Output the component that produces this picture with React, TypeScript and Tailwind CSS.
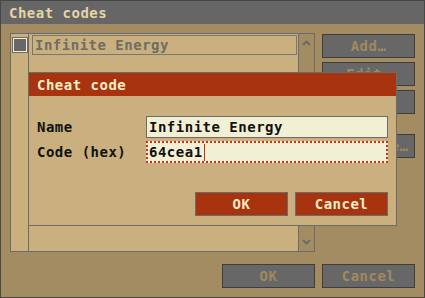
import React from 'react';

const GrayButton: React.FC<{ label: string; className?: string }> = ({ label, className = '' }) => (
  <div
    className={`w-[93px] h-[24px] bg-[#676767] border border-[#3e3e3e] flex items-center justify-center text-[#a08a5c] ${className}`}
  >
    {label}
  </div>
);

const RedButton: React.FC<{ label: string }> = ({ label }) => (
  <div className="w-[93px] h-[24px] bg-[#a8330f] border border-[#6b6b6b] flex items-center justify-center text-[#f6edc6]">
    {label}
  </div>
);

const Chevron: React.FC<{ up?: boolean }> = ({ up }) => (
  <svg width="9" height="6" viewBox="0 0 9 6" className="block">
    <polyline
      points={up ? '1,5 4.5,1.5 8,5' : '1,1 4.5,4.5 8,1'}
      fill="none"
      stroke="#6b6b6b"
      strokeWidth="2"
    />
  </svg>
);

const App: React.FC = () => {
  return (
    <div className="w-[425px] h-[298px] border border-[#474747] bg-[#a38c62] flex flex-col relative overflow-hidden font-['DejaVu_Sans_Mono',monospace] font-bold text-[14px] tracking-[0.5px] leading-none">
      {/* Window title */}
      <div className="h-[23px] shrink-0 bg-[#666666] pl-[8px] flex items-center text-[#e3d5a4]">
        Cheat codes
      </div>

      {/* Body */}
      <div className="flex-1 flex flex-col px-[9px] py-[9px]">
        <div className="flex gap-[7px] h-[219px]">
          {/* Cheat list */}
          <div className="w-[306px] h-full border border-[#6b6b6b] bg-[#c9b07e] flex">
            <div className="w-[18px] shrink-0 border-r border-[#6b6b6b] flex justify-center pt-[4px] pl-[1px]">
              <span className="w-[14px] h-[14px] border border-[#f3efcf] bg-[#676767] outline outline-1 outline-[#6b6b6b]" />
            </div>
            <div className="flex-1 pl-[3px] pr-[1px] pt-[1px]">
              <div className="h-[20px] border border-[#777777] flex items-center pl-[2px] text-[#6e6c66]">
                Infinite Energy
              </div>
            </div>
            <div className="w-[16px] shrink-0 border-l border-[#6b6b6b] bg-[#a38c62] flex flex-col items-center justify-between pt-[6px] pb-[6px]">
              <Chevron up />
              <Chevron />
            </div>
          </div>

          {/* Side buttons */}
          <div className="flex flex-col pt-[1px]">
            <GrayButton label="Add…" />
            <GrayButton label="Edit…" className="mt-[4px]" />
            <GrayButton label="Remove" className="mt-[4px]" />
            <GrayButton label="Database…" className="mt-[20px]" />
          </div>
        </div>

        <div className="mt-[12px] flex justify-end gap-[7px]">
          <GrayButton label="OK" />
          <GrayButton label="Cancel" />
        </div>
      </div>

      {/* Edit dialog */}
      <div className="absolute left-[27px] top-[71px] w-[369px] h-[154px] border border-[#6b6b6b] bg-[#c9b07e] flex flex-col">
        <div className="h-[23px] shrink-0 bg-[#a8330f] pl-[8px] flex items-center text-[#f6edc6]">
          Cheat code
        </div>
        <div className="flex flex-col gap-[3px] pt-[20px] pl-[8px] pr-[8px] text-[#111111]">
          <div className="flex items-center">
            <span className="w-[109px] shrink-0">Name</span>
            <div className="flex-1 h-[22px] bg-[#f2f0d4] border border-[#6b6b6b] flex items-center pl-[2px]">
              Infinite Energy
            </div>
          </div>
          <div className="flex items-center">
            <span className="w-[109px] shrink-0">Code (hex)</span>
            <div className="flex-1 h-[22px] bg-[#f2f0d4] border-2 border-dotted border-[#d42a1e] flex items-center pl-[1px]">
              64cea1
              <span className="w-[1px] h-[17px] bg-[#c0301e] ml-[1px]" />
            </div>
          </div>
        </div>
        <div className="mt-[29px] flex justify-end gap-[7px] pr-[8px]">
          <RedButton label="OK" />
          <RedButton label="Cancel" />
        </div>
      </div>
    </div>
  );
};

export default App;
